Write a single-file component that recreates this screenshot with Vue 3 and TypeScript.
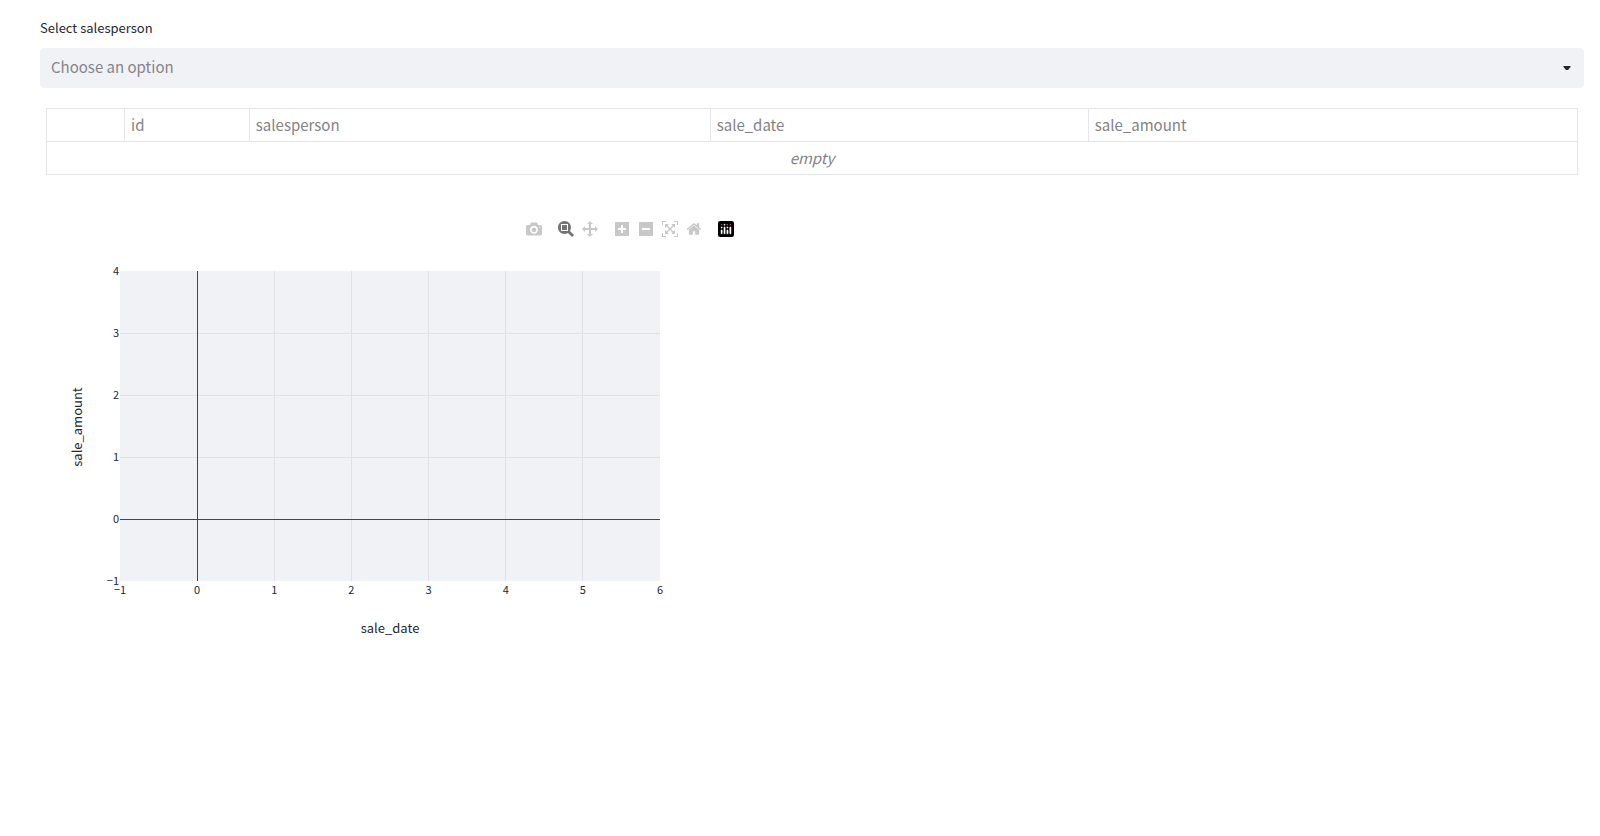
<script setup lang="ts">
import { ref } from 'vue'

interface Tool {
  label: string
  box: string
  path: string
  active?: boolean
}

const salesperson = ref('')
const columns = ['', 'id', 'salesperson', 'sale_date', 'sale_amount']

const toolGroups: Tool[][] = [
  [
    {
      label: 'Download plot as a png',
      box: '0 0 1000 1000',
      path: 'm500 450c-83 0-150-67-150-150 0-83 67-150 150-150 83 0 150 67 150 150 0 83-67 150-150 150z m400 150h-120c-16 0-34 13-39 29l-31 93c-6 15-23 28-40 28h-340c-16 0-34-13-39-28l-31-94c-6-15-23-28-40-28h-120c-55 0-100-45-100-100v-450c0-55 45-100 100-100h800c55 0 100 45 100 100v450c0 55-45 100-100 100z m-400-550c-138 0-250 112-250 250 0 138 112 250 250 250 138 0 250-112 250-250 0-138-112-250-250-250z m365 380c-19 0-35 16-35 35 0 19 16 35 35 35 19 0 35-16 35-35 0-19-16-35-35-35z',
    },
  ],
  [
    {
      label: 'Zoom',
      box: '0 0 1000 1000',
      active: true,
      path: 'm1000-25l-250 251c40 63 63 138 63 218 0 224-182 406-407 406-224 0-406-182-406-406s183-406 407-406c80 0 155 22 218 62l250-250 125 125z m-812 250l0 438 437 0 0-438-437 0z m62 375l313 0 0-312-313 0 0 312z',
    },
    {
      label: 'Pan',
      box: '0 0 1000 1000',
      path: 'm1000 350l-187 188 0-125-250 0 0 250 125 0-188 187-187-187 125 0 0-250-250 0 0 125-188-188 186-187 0 125 252 0 0-250-125 0 187-188 188 188-125 0 0 250 250 0 0-126 187 188z',
    },
  ],
  [
    {
      label: 'Zoom in',
      box: '0 0 875 1000',
      path: 'm1 787l0-875 875 0 0 875-875 0z m687-500l-187 0 0-187-125 0 0 187-188 0 0 125 188 0 0 187 125 0 0-187 187 0 0-125z',
    },
    {
      label: 'Zoom out',
      box: '0 0 875 1000',
      path: 'm0 788l0-876 876 0 0 876-876 0z m688-500l-500 0 0 125 500 0 0-125z',
    },
    {
      label: 'Autoscale',
      box: '0 0 1000 1000',
      path: 'm250 850l-187 0-63 0 0-62 0-188 63 0 0 188 187 0 0 62z m688 0l-188 0 0-62 188 0 0-188 62 0 0 188 0 62-62 0z m-875-938l0 188-63 0 0-188 0-62 63 0 187 0 0 62-187 0z m875 188l0-188-188 0 0-62 188 0 62 0 0 62 0 188-62 0z m-125 188l-1 0-93-94-156 156 156 156 92-93 2 0 0 250-250 0 0-2 93-92-156-156-156 156 94 92 0 2-250 0 0-250 0 0 93 93 157-156-157-156-93 94 0 0 0-250 250 0 0 0-94 93 156 157 156-157-93-93 0 0 250 0 0 250z',
    },
    {
      label: 'Reset axes',
      box: '0 0 928 1000',
      path: 'm786 296v-267q0-15-11-26t-25-10h-214v214h-143v-214h-214q-15 0-25 10t-11 26v267q0 1 0 2t0 2l321 264 321-264q1-1 1-4z m124 39l-34-41q-5-5-12-6h-2q-7 0-12 3l-386 322-386-322q-7-4-13-4-7 2-12 7l-35 41q-4 5-3 13t6 12l401 334q18 15 42 15t43-15l136-114v109q0 8 5 13t13 5h107q8 0 13-5t5-13v-227l122-102q5-5 6-12t-4-13z',
    },
  ],
]

// Plot area inside the chart's own coordinate system
const plot = { x: 80, y: 26, w: 540, h: 310 }
const range = (from: number, to: number) =>
  Array.from({ length: to - from + 1 }, (_, i) => from + i)
const px = (v: number) => plot.x + ((v + 1) * plot.w) / 7
const py = (v: number) => plot.y + ((4 - v) * plot.h) / 5
const fmt = (v: number) => (v < 0 ? `−${-v}` : `${v}`)
const xTicks = range(-1, 6)
const yTicks = range(-1, 4)
</script>

<template>
  <main class="page">
    <label class="label" for="salesperson">Select salesperson</label>
    <div class="select">
      <select id="salesperson" v-model="salesperson">
        <option value="">Choose an option</option>
      </select>
      <svg class="caret" viewBox="0 0 8 4" aria-hidden="true"><path d="M.5 0h7v1L5 4H3L.5 1z" /></svg>
    </div>

    <table class="data">
      <colgroup>
        <col class="c-index" />
        <col class="c-id" />
        <col class="c-person" />
        <col class="c-date" />
        <col />
      </colgroup>
      <thead>
        <tr>
          <th v-for="c in columns" :key="c" scope="col">{{ c }}</th>
        </tr>
      </thead>
      <tbody>
        <tr>
          <td colspan="5">empty</td>
        </tr>
      </tbody>
    </table>

    <section class="chart">
      <div class="modebar">
        <div v-for="(group, i) in toolGroups" :key="i" class="group">
          <button
            v-for="t in group"
            :key="t.label"
            type="button"
            :class="{ active: t.active }"
            :aria-label="t.label"
          >
            <svg :viewBox="t.box">
              <path :d="t.path" transform="matrix(1 0 0 -1 0 850)" />
            </svg>
          </button>
        </div>
        <div class="group">
          <a href="#" class="logo" aria-label="Produced with Plotly">
            <svg viewBox="0 0 132 132">
              <rect width="132" height="132" rx="18" />
              <g fill="#e0457b">
                <circle cx="102" cy="30" r="6" />
                <circle cx="78" cy="30" r="6" />
                <circle cx="30" cy="30" r="6" />
              </g>
              <g fill="#fff" stroke="#fff" stroke-width="2">
                <circle cx="78" cy="54" r="6" />
                <circle cx="54" cy="30" r="6" />
                <circle cx="30" cy="54" r="6" />
                <path
                  d="M30 72a6 6 0 0 0-6 6v24a6 6 0 0 0 12 0V78a6 6 0 0 0-6-6zM78 72a6 6 0 0 0-6 6v24a6 6 0 0 0 12 0V78a6 6 0 0 0-6-6zM54 48a6 6 0 0 0-6 6v48a6 6 0 0 0 12 0V54a6 6 0 0 0-6-6zM102 48a6 6 0 0 0-6 6v48a6 6 0 0 0 12 0V54a6 6 0 0 0-6-6z"
                />
              </g>
            </svg>
          </a>
        </div>
      </div>

      <svg class="plot" viewBox="0 0 700 410" role="img" aria-label="sale_amount by sale_date">
        <rect class="area" :x="plot.x" :y="plot.y" :width="plot.w" :height="plot.h" />
        <g class="grid">
          <rect v-for="v in range(1, 5)" :key="'x' + v" :x="Math.floor(px(v))" :y="plot.y" width="1" :height="plot.h" />
          <rect v-for="v in range(1, 3)" :key="'y' + v" :x="plot.x" :y="py(v)" :width="plot.w" height="1" />
        </g>
        <g class="zero">
          <rect :x="Math.floor(px(0))" :y="plot.y" width="1" :height="plot.h" />
          <rect :x="plot.x" :y="py(0)" :width="plot.w" height="1" />
        </g>
        <g class="ticks">
          <text v-for="v in xTicks" :key="'tx' + v" :x="px(v)" y="349" text-anchor="middle">{{ fmt(v) }}</text>
          <text v-for="v in yTicks" :key="'ty' + v" x="79" :y="py(v) + 4" text-anchor="end">{{ fmt(v) }}</text>
        </g>
        <text class="title" x="350" y="388" text-anchor="middle">sale_date</text>
        <text class="title" transform="translate(42 182) rotate(-90)" text-anchor="middle">sale_amount</text>
      </svg>
    </section>
  </main>
</template>

<style>
body {
  margin: 0;
  background: #fff;
}
</style>

<style scoped>
.page {
  box-sizing: border-box;
  padding: 16px 16px 0 40px;
  font-family: 'Noto Sans CJK SC', 'Open Sans', sans-serif;
  font-size: 15px;
  line-height: 24px;
  color: #262730;
}
.label {
  display: block;
  height: 32px;
  font-size: 13px;
}
.select {
  display: grid;
  align-items: center;
}
.select > * {
  grid-area: 1 / 1;
}
.select select {
  appearance: none;
  width: 100%;
  height: 40px;
  padding: 0 32px 2px 11px;
  border: 0;
  border-radius: 4px;
  background: #f0f2f6;
  color: #83858a;
  font: inherit;
}
.caret {
  justify-self: end;
  width: 8px;
  height: 4px;
  margin-right: 13px;
  fill: #262730;
  pointer-events: none;
}
.data {
  width: calc(100% - 12px);
  margin: 20px 6px 0;
  border-collapse: collapse;
  table-layout: fixed;
  color: #838385;
}
.c-index { width: 5.1%; }
.c-id { width: 8.15%; }
.c-person { width: 30.1%; }
.c-date { width: 24.7%; }
.data th,
.data td {
  box-sizing: border-box;
  height: 33px;
  padding: 0 6px;
  border: 1px solid #e6e6e8;
  font-weight: 400;
  text-align: left;
}
.data td {
  text-align: center;
  font-style: italic;
}
.chart {
  max-width: 700px;
  margin-top: 43px;
}
.modebar {
  display: flex;
  justify-content: flex-end;
  height: 27px;
  padding-right: 2px;
}
.group {
  display: flex;
  align-items: flex-start;
  margin-left: 8px;
}
.group button,
.logo {
  display: block;
  padding: 3px 4px;
  border: 0;
  background: none;
  line-height: 0;
}
.group svg {
  display: block;
  width: 16px;
  height: 16px;
}
.group button svg {
  fill: #c8c8c8;
}
.group button.active svg {
  fill: #747474;
}
.plot {
  display: block;
  width: 100%;
}
.area { fill: #f0f2f6; }
.grid { fill: #dfe1e5; }
.zero { fill: #444; }
.ticks { font-size: 11px; fill: #262730; }
.title { font-size: 13px; fill: #262730; }
</style>
